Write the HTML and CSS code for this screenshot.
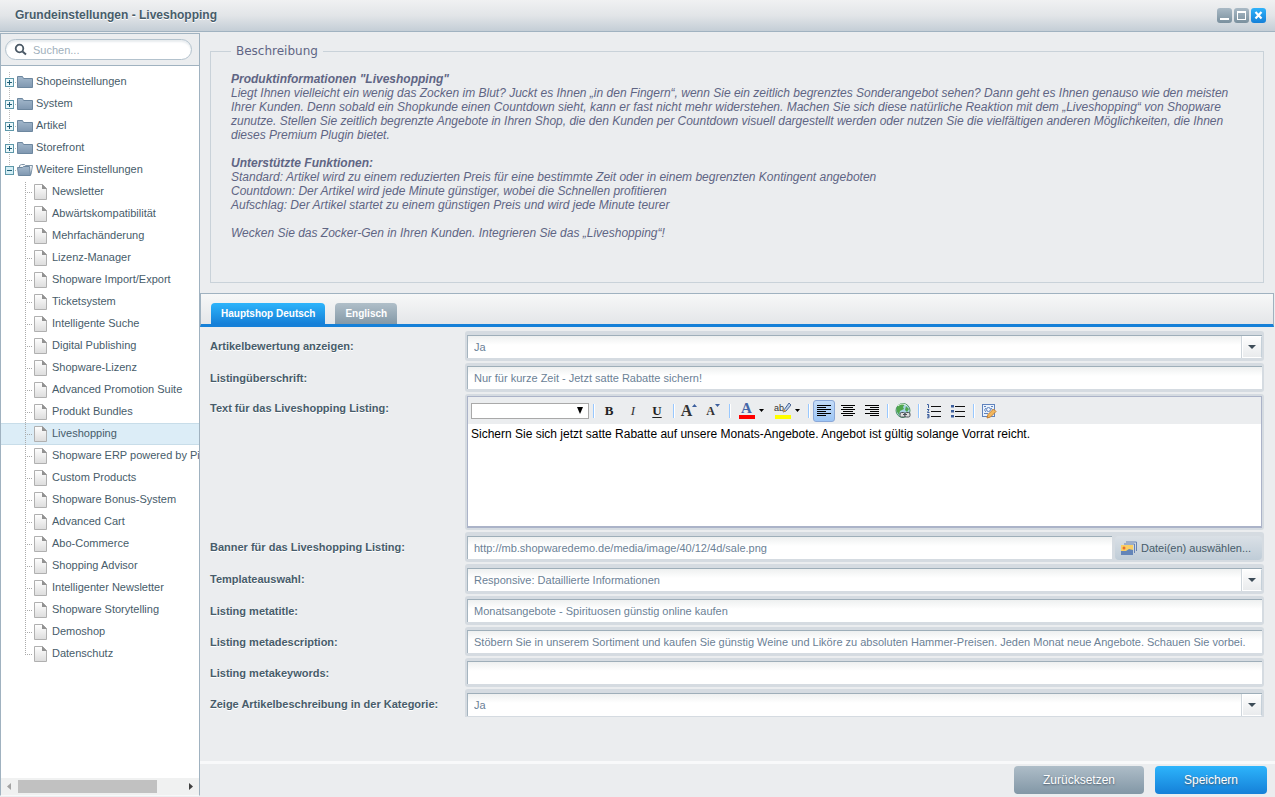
FILE: index.html
```html
<!DOCTYPE html>
<html lang="de">
<head>
<meta charset="utf-8">
<title>Grundeinstellungen - Liveshopping</title>
<link rel="stylesheet" href="styles.css">
</head>
<body>
<svg class="defs" aria-hidden="true">
  <defs>
    <linearGradient id="gFolder" x1="0" y1="0" x2="0" y2="1"><stop offset="0" stop-color="#a3b8cc"/><stop offset="1" stop-color="#7f97b0"/></linearGradient>
    <linearGradient id="gPage" x1="0" y1="0" x2="0" y2="1"><stop offset="0" stop-color="#ffffff"/><stop offset="1" stop-color="#dcdcdc"/></linearGradient>
  </defs>
  <symbol id="folder" viewBox="0 0 34 22">
    <path d="M8.5 1V22M14 11.5H16" stroke="#bbb" stroke-dasharray="1 1" fill="none"/>
    <rect x="4.5" y="7.5" width="8" height="8" fill="#eaf7fa" stroke="#5d97a9"/>
    <path d="M6 11.5H11M8.5 9V14" stroke="#1f5f78"/>
    <path d="M16.500 5.500H21.500L22.500 7.500H31.500V16.500H16.500Z" fill="url(#gFolder)" stroke="#6d879f"/>
  </symbol>
  <symbol id="folder-open" viewBox="0 0 34 22">
    <path d="M8.500 1V6M14 11.500H16" stroke="#bbb" stroke-dasharray="1 1" fill="none"/>
    <rect x="4.500" y="7.500" width="8" height="8" fill="#d3eef5" stroke="#5d97a9"/>
    <path d="M6 11.500H11" stroke="#1f5f78"/>
    <path d="M18.500 8V6.500L20.500 5.500H23.500L24.500 6.500H31.500L30 15.500H18Z" fill="#f4f6f8" stroke="#7f95a8"/>
    <path d="M16.500 8.500H21.500L22.500 7.500H28.500L29.500 16.500H17.500Z" fill="url(#gFolder)" stroke="#6d879f"/>
  </symbol>
  <symbol id="page" viewBox="0 0 50 22">
    <path d="M24.500 1V22M26 11.500H32" stroke="#aaa" stroke-dasharray="1 1" fill="none"/>
    <path d="M33.500 3.500H41.500L45.500 7.500V18.500H33.500Z" fill="url(#gPage)" stroke="#b0b0b0"/>
    <path d="M41 3L46 8H41Z" fill="#929292"/>
  </symbol>
  <symbol id="page-last" viewBox="0 0 50 22">
    <path d="M24.500 1V12M26 11.500H32" stroke="#aaa" stroke-dasharray="1 1" fill="none"/>
    <path d="M33.500 3.500H41.500L45.500 7.500V18.500H33.500Z" fill="url(#gPage)" stroke="#b0b0b0"/>
    <path d="M41 3L46 8H41Z" fill="#929292"/>
  </symbol>
  <symbol id="caret" viewBox="0 0 8 4"><path d="M0 0H8L4 4Z" fill="#3d4c58"/></symbol>
</svg>

<header class="titlebar">
  <h1 class="title">Grundeinstellungen - Liveshopping</h1>
  <div class="tools">
    <button class="tool" type="button" aria-label="Minimieren"><svg width="15" height="15"><path d="M3 11H12" stroke="#fff" stroke-width="2"/></svg></button>
    <button class="tool" type="button" aria-label="Maximieren"><svg width="15" height="15"><rect x="3.500" y="4" width="8" height="7.500" fill="none" stroke="#fff"/><path d="M3 4H12" stroke="#fff" stroke-width="2"/></svg></button>
    <button class="tool tool-close" type="button" aria-label="Schließen"><svg width="15" height="15"><path d="M4.500 4L10.500 10.500M10.500 4L4.500 10.500" stroke="#fff" stroke-width="2.200"/></svg></button>
  </div>
</header>

<div class="body">
  <aside class="sidebar">
    <div class="search">
      <label class="search-box">
        <svg width="14" height="14"><circle cx="5.500" cy="5.500" r="3.800" fill="none" stroke="#4a5865" stroke-width="1.800"/><path d="M8.500 8.500L12 11.500" stroke="#4a5865" stroke-width="2"/></svg>
        <input type="search" placeholder="Suchen..." aria-label="Suchen">
      </label>
    </div>
    <nav class="tree">
      <a class="node" href="#"><svg class="i-folder"><use href="#folder"/></svg>Shopeinstellungen</a>
      <a class="node" href="#"><svg class="i-folder"><use href="#folder"/></svg>System</a>
      <a class="node" href="#"><svg class="i-folder"><use href="#folder"/></svg>Artikel</a>
      <a class="node" href="#"><svg class="i-folder"><use href="#folder"/></svg>Storefront</a>
      <a class="node" href="#"><svg class="i-folder"><use href="#folder-open"/></svg>Weitere Einstellungen</a>
      <a class="node" href="#"><svg class="i-page"><use href="#page"/></svg>Newsletter</a>
      <a class="node" href="#"><svg class="i-page"><use href="#page"/></svg>Abwärtskompatibilität</a>
      <a class="node" href="#"><svg class="i-page"><use href="#page"/></svg>Mehrfachänderung</a>
      <a class="node" href="#"><svg class="i-page"><use href="#page"/></svg>Lizenz-Manager</a>
      <a class="node" href="#"><svg class="i-page"><use href="#page"/></svg>Shopware Import/Export</a>
      <a class="node" href="#"><svg class="i-page"><use href="#page"/></svg>Ticketsystem</a>
      <a class="node" href="#"><svg class="i-page"><use href="#page"/></svg>Intelligente Suche</a>
      <a class="node" href="#"><svg class="i-page"><use href="#page"/></svg>Digital Publishing</a>
      <a class="node" href="#"><svg class="i-page"><use href="#page"/></svg>Shopware-Lizenz</a>
      <a class="node" href="#"><svg class="i-page"><use href="#page"/></svg>Advanced Promotion Suite</a>
      <a class="node" href="#"><svg class="i-page"><use href="#page"/></svg>Produkt Bundles</a>
      <a class="node node-selected" href="#" aria-current="page"><svg class="i-page"><use href="#page"/></svg>Liveshopping</a>
      <a class="node" href="#"><svg class="i-page"><use href="#page"/></svg>Shopware ERP powered by Pi</a>
      <a class="node" href="#"><svg class="i-page"><use href="#page"/></svg>Custom Products</a>
      <a class="node" href="#"><svg class="i-page"><use href="#page"/></svg>Shopware Bonus-System</a>
      <a class="node" href="#"><svg class="i-page"><use href="#page"/></svg>Advanced Cart</a>
      <a class="node" href="#"><svg class="i-page"><use href="#page"/></svg>Abo-Commerce</a>
      <a class="node" href="#"><svg class="i-page"><use href="#page"/></svg>Shopping Advisor</a>
      <a class="node" href="#"><svg class="i-page"><use href="#page"/></svg>Intelligenter Newsletter</a>
      <a class="node" href="#"><svg class="i-page"><use href="#page"/></svg>Shopware Storytelling</a>
      <a class="node" href="#"><svg class="i-page"><use href="#page"/></svg>Demoshop</a>
      <a class="node" href="#"><svg class="i-page"><use href="#page-last"/></svg>Datenschutz</a>
    </nav>
    <div class="scrollbar">
      <svg width="17" height="17"><path d="M10 5V12L6 8.500Z" fill="#a3a3a3"/></svg>
      <div class="scroll-track"><div class="scroll-thumb"></div></div>
      <svg width="17" height="17"><path d="M7 5V12L11 8.500Z" fill="#404040"/></svg>
    </div>
  </aside>

  <main class="main">
    <section class="description">
      <fieldset class="fieldset">
        <legend>Beschreibung</legend>
        <p><strong>Produktinformationen "Liveshopping"</strong><br>
        Liegt Ihnen vielleicht ein wenig das Zocken im Blut? Juckt es Ihnen „in den Fingern“, wenn Sie ein zeitlich begrenztes Sonderangebot sehen? Dann geht es Ihnen genauso wie den meisten Ihrer Kunden. Denn sobald ein Shopkunde einen Countdown sieht, kann er fast nicht mehr widerstehen. Machen Sie sich diese natürliche Reaktion mit dem „Liveshopping“ von Shopware zunutze. Stellen Sie zeitlich begrenzte Angebote in Ihren Shop, die den Kunden per Countdown visuell dargestellt werden oder nutzen Sie die vielfältigen anderen Möglichkeiten, die Ihnen dieses Premium Plugin bietet.</p>
        <p><strong>Unterstützte Funktionen:</strong><br>
        Standard: Artikel wird zu einem reduzierten Preis für eine bestimmte Zeit oder in einem begrenzten Kontingent angeboten<br>
        Countdown: Der Artikel wird jede Minute günstiger, wobei die Schnellen profitieren<br>
        Aufschlag: Der Artikel startet zu einem günstigen Preis und wird jede Minute teurer</p>
        <p>Wecken Sie das Zocker-Gen in Ihren Kunden. Integrieren Sie das „Liveshopping“!</p>
      </fieldset>
    </section>

    <div class="tabs" role="tablist">
      <button class="tab tab-active" type="button" role="tab" aria-selected="true">Hauptshop Deutsch</button>
      <button class="tab" type="button" role="tab" aria-selected="false">Englisch</button>
    </div>

    <form class="form" id="settings">
      <div class="row">
        <label for="rating">Artikelbewertung anzeigen:</label>
        <div class="field combo"><select id="rating"><option>Ja</option><option>Nein</option></select><span class="trigger"><svg width="8" height="4"><use href="#caret"/></svg></span></div>
      </div>
      <div class="row">
        <label for="headline">Listingüberschrift:</label>
        <div class="field"><input id="headline" type="text" value="Nur für kurze Zeit - Jetzt satte Rabatte sichern!"></div>
      </div>
      <div class="row row-editor">
        <label for="text">Text für das Liveshopping Listing:</label>
        <div class="field field-editor">
          <div class="editor">
            <div class="toolbar">
              <span class="font-box"><select class="font-select" aria-label="Schriftart"><option></option></select><svg width="6" height="7"><path d="M0 0H6L3 7Z" fill="#000"/></svg></span>
              <i class="sep"></i>
              <button class="tb tb-b" type="button" aria-label="Fett">B</button>
              <button class="tb tb-i" type="button" aria-label="Kursiv">I</button>
              <button class="tb tb-u" type="button" aria-label="Unterstrichen">U</button>
              <i class="sep"></i>
              <button class="tb tb-grow" type="button" aria-label="Schrift vergrößern">A<svg width="5" height="14"><path d="M0 3H5L2.500 0Z" fill="#3c5f9e"/></svg></button>
              <button class="tb tb-shrink" type="button" aria-label="Schrift verkleinern">A<svg width="5" height="14"><path d="M0 0H5L2.500 3Z" fill="#3c5f9e"/></svg></button>
              <i class="sep"></i>
              <button class="tb tb-menu" type="button" aria-label="Schriftfarbe"><span class="ink ink-red">A</span><svg width="5" height="3"><path d="M0 0H5L2.500 3Z"/></svg></button>
              <button class="tb tb-menu" type="button" aria-label="Hintergrundfarbe"><span class="ink ink-yellow">ab<svg class="pen" width="9" height="11"><path d="M2 8L7 1L9 3L4 9L1 10Z" fill="#b9cfec" stroke="#4a6594"/><path d="M1 10L2 7L4 9Z" fill="#e9a13b"/></svg></span><svg width="5" height="3"><path d="M0 0H5L2.500 3Z"/></svg></button>
              <i class="sep"></i>
              <button class="tb tb-on" type="button" aria-label="Linksbündig"><svg width="16" height="16"><path d="M1 2.500H15M1 4.500H10M1 6.500H15M1 8.500H10M1 10.500H15M1 12.500H10" stroke="#000"/></svg></button>
              <button class="tb" type="button" aria-label="Zentriert"><svg width="16" height="16"><path d="M1 2.500H15M3 4.500H13M1 6.500H15M3 8.500H13M1 10.500H15M3 12.500H13" stroke="#000"/></svg></button>
              <button class="tb" type="button" aria-label="Rechtsbündig"><svg width="16" height="16"><path d="M1 2.500H15M6 4.500H15M1 6.500H15M6 8.500H15M1 10.500H15M6 12.500H15" stroke="#000"/></svg></button>
              <i class="sep"></i>
              <button class="tb" type="button" aria-label="Link"><svg width="16" height="16"><circle cx="8" cy="7.500" r="7" fill="#a9d3e6" stroke="#4f9468"/><path d="M2 4C4 1 8 .5 10 1L8 4L9 6L5 8L4 12L1.500 8ZM11 3L14 6L12 9L10 7Z" fill="#4fa64c"/><path d="M3 3C6 0 10 1 12 3" stroke="#e4f6e0" fill="none"/><rect x="5" y="9.500" width="5" height="4.500" rx="1.500" fill="#ddd" stroke="#4a4f55"/><rect x="10" y="9.500" width="5" height="4.500" rx="1.500" fill="#ddd" stroke="#4a4f55"/><path d="M8 11.500H12" stroke="#4a4f55"/></svg></button>
              <i class="sep"></i>
              <button class="tb" type="button" aria-label="Nummerierte Liste"><svg width="16" height="16"><path d="M5 3.500H15M5 8.500H15M5 13.500H15" stroke="#111"/><path d="M1 1.500H2.500V5M1 6.500H3L1.500 9.500H3.500M1 11.500H3V13H1.500H3V14.800H1" stroke="#3c5f9e" fill="none"/></svg></button>
              <button class="tb" type="button" aria-label="Aufzählung"><svg width="16" height="16"><path d="M5 3.500H15M5 8.500H15M5 13.500H15" stroke="#111"/><path d="M1 2H4V4.500H1ZM1 7H4V9.500H1ZM1 12H4V14.500H1Z" fill="#3c5f9e"/></svg></button>
              <i class="sep"></i>
              <button class="tb" type="button" aria-label="Quelltext"><svg width="16" height="16"><rect x="1.500" y="1.500" width="12" height="12" fill="#eaf2fc" stroke="#5f83bd"/><path d="M3 3.500H5M10 3.500H12M3 10.500H7M5 5L3.500 7L5 9M10 5L11.500 7" stroke="#5f83bd" fill="none"/><circle cx="7.500" cy="6.500" r="2" fill="none" stroke="#5f83bd"/><path d="M6 15L7 11.500L12.500 6L15 8.500L9.500 14Z" fill="#f2b75c" stroke="#c47f35"/></svg></button>
            </div>
            <textarea id="text">Sichern Sie sich jetzt satte Rabatte auf unsere Monats-Angebote. Angebot ist gültig solange Vorrat reicht.</textarea>
          </div>
        </div>
      </div>
      <div class="row">
        <label for="banner">Banner für das Liveshopping Listing:</label>
        <div class="field combo media">
          <input id="banner" type="text" value="http://mb.shopwaredemo.de/media/image/40/12/4d/sale.png">
          <button class="browse" type="button"><svg width="17" height="14"><path d="M5 1H15.500V10M3 3H13.500V12" fill="none" stroke="#6682b3"/><rect x="0" y="4" width="12" height="10" fill="#f9cf65"/><path d="M0 10L5 10L8 8L12 9V14H0Z" fill="#6485b8"/><circle cx="3" cy="7" r="1.500" fill="#e9702a"/></svg>Datei(en) auswählen...</button>
        </div>
      </div>
      <div class="row">
        <label for="template">Templateauswahl:</label>
        <div class="field combo"><select id="template"><option>Responsive: Dataillierte Informationen</option></select><span class="trigger"><svg width="8" height="4"><use href="#caret"/></svg></span></div>
      </div>
      <div class="row">
        <label for="metatitle">Listing metatitle:</label>
        <div class="field"><input id="metatitle" type="text" value="Monatsangebote - Spirituosen günstig online kaufen"></div>
      </div>
      <div class="row">
        <label for="metadesc">Listing metadescription:</label>
        <div class="field"><input id="metadesc" type="text" value="Stöbern Sie in unserem Sortiment und kaufen Sie günstig Weine und Liköre zu absoluten Hammer-Preisen. Jeden Monat neue Angebote. Schauen Sie vorbei."></div>
      </div>
      <div class="row">
        <label for="metakeys">Listing metakeywords:</label>
        <div class="field"><input id="metakeys" type="text" value=""></div>
      </div>
      <div class="row">
        <label for="showdesc">Zeige Artikelbeschreibung in der Kategorie:</label>
        <div class="field combo combo-last"><select id="showdesc"><option>Ja</option><option>Nein</option></select><span class="trigger"><svg width="8" height="4"><use href="#caret"/></svg></span></div>
      </div>
    </form>

    <footer class="footer">
      <button class="btn btn-reset" type="reset" form="settings">Zurücksetzen</button>
      <button class="btn btn-save" type="submit" form="settings">Speichern</button>
    </footer>
  </main>
</div>
</body>
</html>
```
FILE: styles.css
```css
* { box-sizing: border-box; }

body {
  margin: 0;
  height: 100vh;
  display: flex;
  flex-direction: column;
  overflow: hidden;
  background: #ebedef;
  color: #475c6a;
  font: 11px/14px "Liberation Sans", Arial, sans-serif;
}

button, input, select, textarea {
  font: inherit;
  color: inherit;
  margin: 0;
  border: 0;
  border-radius: 0;
  outline: 0;
}

svg { flex: none; display: block; }
.defs { position: absolute; width: 0; height: 0; }

/* Title bar */
.titlebar {
  flex: none;
  height: 32px;
  padding: 0 9px 0 15px;
  display: flex;
  align-items: center;
  justify-content: space-between;
  background: linear-gradient(#f0f1f2, #e2e5e8 50%, #c4ced6);
  border-bottom: 1px solid #a0b2c0;
}
.title {
  margin: 0;
  font-size: 12px;
  line-height: 28px;
  height: 30px;
  text-shadow: 0 1px 0 #fff;
}
.tools { display: flex; gap: 2px; }
.tool {
  width: 15px;
  height: 15px;
  padding: 0;
  border-radius: 3px;
  background: linear-gradient(#a9b9c5, #7a909e);
}
.tool-close { background: linear-gradient(#2fb2fa, #1580d8); }

.body { flex: 1; min-height: 0; display: flex; padding-top: 1px; }

/* Sidebar */
.sidebar {
  flex: none;
  width: 200px;
  margin-bottom: 1px;
  display: flex;
  flex-direction: column;
  border: 1px solid #a0b2c0;
  border-bottom-color: #f8f9fa;
  background: #fff;
}
.search {
  padding: 5px 7px 5px 4px;
  background: #ebedef;
  border-bottom: 1px solid #a0b2c0;
}
.search-box {
  height: 21px;
  display: flex;
  align-items: center;
  gap: 5px;
  padding: 0 8px;
  border: 1px solid #b3c2cd;
  border-radius: 11px;
  background: #fff;
  box-shadow: inset 0 2px 2px #e8ecef;
}
.search-box input {
  flex: 1;
  min-width: 0;
  padding: 0;
  background: none;
}
.search-box input::placeholder { color: #9fb0bc; opacity: 1; }

.tree { flex: 1; min-height: 0; overflow: hidden; padding-top: 5px; }
.node {
  height: 22px;
  display: flex;
  color: #475c6a;
  line-height: 20px;
  white-space: nowrap;
  text-decoration: none;
}
.node-selected {
  background: #dcedf7;
  box-shadow: inset 0 1px 0 #c8dde9, inset 0 -1px 0 #c8dde9;
}
.i-folder { width: 34px; height: 22px; margin-right: 1px; }
.i-page { width: 50px; height: 22px; margin-right: 1px; }

.scrollbar {
  flex: none;
  display: flex;
  align-items: center;
  background: #f0f1f1;
}
.scroll-track { flex: 1; }
.scroll-thumb { width: 85%; height: 13px; background: #c1c1c1; }

/* Main column */
.main { flex: 1; min-width: 0; display: flex; flex-direction: column; }
.description { padding: 10px 11px 10px 10px; }
.fieldset {
  margin: 0;
  padding: 13px 20px 30px;
  border: 1px solid #c9d2d9;
  color: #5f6584;
  font-size: 12px;
  font-style: italic;
}
.fieldset legend {
  padding: 0 5px;
  font: 12px/16px "DejaVu Sans", sans-serif;
}
.fieldset p { margin: 0; padding-bottom: 14px; }
.fieldset p:last-child { padding-bottom: 12px; }

.tabs {
  flex: none;
  height: 34px;
  display: flex;
  align-items: flex-end;
  gap: 10px;
  padding: 0 10px;
  margin-right: 1px;
  background: linear-gradient(#f7f8f8, #e4e6e9);
  border: 1px solid #a0b2c0;
  border-bottom: 3px solid #1580d8;
}
.tab {
  height: 21px;
  padding: 0 10px;
  border-radius: 4px 4px 0 0;
  background: linear-gradient(#b0bfc9, #8499a7);
  color: #fff;
  font-size: 10px;
  font-weight: bold;
}
.tab-active { background: linear-gradient(#2db4fb, #1580d8); }

/* Form */
.form {
  flex: 1;
  min-height: 0;
  display: flex;
  flex-direction: column;
  gap: 2px;
  padding: 4px 11px 0 10px;
}
.row { display: grid; grid-template-columns: 255px minmax(0, 1fr); }
.row > label {
  padding-top: 8px;
  font-weight: bold;
  text-shadow: 0 1px 0 #fff;
}
.row-editor > label { padding-top: 7px; }
.field {
  position: relative;
  display: flex;
  padding: 3px 2px;
  border-radius: 3px;
  background: #d5dbe1;
}
.combo { padding-top: 4px; }
.combo-last { padding-bottom: 1px; border-radius: 3px 3px 0 0; }
.field > input, .field > select {
  flex: 1;
  min-width: 0;
  height: 23px;
  padding: 0 6px;
  appearance: none;
  color: #6b8196;
  background: linear-gradient(#eef0f0, #fff 9px);
  border-top: 1px solid #9eaeb9;
  border-left: 1px solid #a5b4bf;
}
.trigger {
  position: absolute;
  right: 2px;
  top: 5px;
  width: 20px;
  height: 22px;
  display: grid;
  place-items: center;
  pointer-events: none;
  background: linear-gradient(#fdfdfd, #e9ebed);
  border: 1px solid #fff;
  border-right-color: #c5d0d9;
  box-shadow: -1px 0 0 #cfd6dc;
}

.field-editor { padding: 2px; }
.editor {
  flex: 1;
  min-width: 0;
  border: 1px solid #abb3c8;
  border-bottom-width: 2px;
  background: #fff;
}
.toolbar {
  display: flex;
  align-items: center;
  height: 27px;
  padding-left: 3px;
  background: #ebedef;
}
.font-box { position: relative; display: flex; }
.font-box svg { position: absolute; right: 6px; top: 4px; pointer-events: none; }
.font-select {
  width: 118px;
  height: 16px;
  appearance: none;
  background: #fff;
  border: 1px solid #a9a9a9;
}
.sep {
  width: 1px;
  height: 14px;
  margin: 0 3px 0 4px;
  background: #98c8ff;
  box-shadow: 1px 0 0 #fff;
}
.tb {
  width: 24px;
  height: 22px;
  padding: 0;
  display: flex;
  align-items: center;
  justify-content: center;
  background: none;
  color: #222;
  font: bold 13px/16px "Liberation Serif", serif;
}
.tb-i { font-style: italic; font-weight: normal; color: #333; }
.tb-u { text-decoration: underline; text-underline-offset: 2px; }
.tb-grow { font-size: 16px; color: #333; }
.tb-shrink { font-size: 12px; color: #333; }
.tb-menu { width: 36px; gap: 4px; }
.tb-menu + .sep { margin-left: 3px; }
.tb-on {
  width: 22px;
  margin: 0 1px;
  border: 1px solid #8ba8d8;
  border-radius: 3px;
  background: linear-gradient(#c4dcf8, #9cc5f5);
}
.tb-on ~ .sep { margin-left: 3px; }
.ink {
  width: 16px;
  height: 17px;
  display: flex;
  justify-content: center;
  color: #4467a8;
  line-height: 13px;
}
.ink-red { font-size: 15px; border-bottom: 4px solid #f00; }
.ink-yellow {
  font: 9px/13px "Liberation Sans", Arial, sans-serif;
  color: #333;
  border-bottom: 4px solid #ff0;
}
.pen { margin-left: -2px; }

.editor textarea {
  display: block;
  width: 100%;
  height: 102px;
  padding: 3px;
  resize: none;
  background: #fff;
  color: #000;
  font-size: 12px;
}

.media { gap: 3px; }
.browse {
  width: 147px;
  height: 24px;
  margin-bottom: -1px;
  padding: 0 6px;
  display: flex;
  align-items: center;
  gap: 3px;
  white-space: nowrap;
  border-radius: 4px;
  background: linear-gradient(#dae0e6, #bfccd7);
}

/* Footer */
.footer {
  flex: none;
  display: flex;
  justify-content: flex-end;
  gap: 11px;
  padding: 2px 8px 3px;
  border-top: 3px solid #f8f9fa;
}
.btn {
  height: 28px;
  border-radius: 4px;
  color: #fff;
  font-size: 12px;
  text-shadow: 0 1px 2px #47596a;
}
.btn-reset { width: 130px; background: linear-gradient(#aebdc8, #8297a6); }
.btn-save { width: 112px; background: linear-gradient(#2db4fb, #1580d8); }
```
